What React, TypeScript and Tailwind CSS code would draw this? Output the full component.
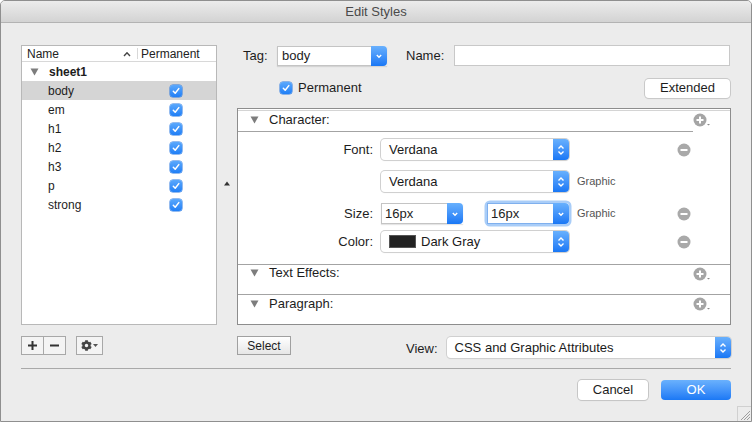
import React from "react";
import { FaCog } from "react-icons/fa";

const Check = () => (
  <span className="w-[12px] h-[12px] rounded-[3px] bg-gradient-to-b from-[#5aa8fc] to-[#1f7ff6] flex items-center justify-center shadow-[0_0_0_0.5px_#2a78e0]">
    <svg width="10" height="10" viewBox="0 0 10 10">
      <path d="M2.3 5.3 L4.2 7.2 L7.8 2.6" stroke="white" strokeWidth="1.5" fill="none" strokeLinecap="round" strokeLinejoin="round" />
    </svg>
  </span>
);

const UpDown = () => (
  <span className="w-[16px] h-full rounded-r-[4px] bg-gradient-to-b from-[#68b0fd] to-[#1877f5] flex items-center justify-center shrink-0">
    <svg width="10" height="14" viewBox="0 0 10 14">
      <path d="M2.5 5.5 L5 3 L7.5 5.5" stroke="white" strokeWidth="1.4" fill="none" />
      <path d="M2.5 8.5 L5 11 L7.5 8.5" stroke="white" strokeWidth="1.4" fill="none" />
    </svg>
  </span>
);

const DownOnly = () => (
  <span className="w-[16px] h-full rounded-r-[4px] bg-gradient-to-b from-[#68b0fd] to-[#1877f5] flex items-center justify-center shrink-0">
    <svg width="10" height="10" viewBox="0 0 10 10">
      <path d="M2.8 4 L5 6.2 L7.2 4" stroke="white" strokeWidth="1.4" fill="none" />
    </svg>
  </span>
);

const Popup = ({ w, children }: { w: string; children: React.ReactNode }) => (
  <div className={`${w} h-[21px] flex rounded-[4px] bg-white shadow-[0_0_0_1px_#d0d0d0,0_1px_1px_rgba(0,0,0,0.12)]`}>
    <div className="flex-1 flex items-center pl-[8px] text-[13px] text-[#1a1a1a] overflow-hidden">{children}</div>
    <UpDown />
  </div>
);

const Minus = () => (
  <svg width="14" height="14" viewBox="0 0 14 14" className="shrink-0">
    <circle cx="7" cy="7" r="6.5" fill="#a9a9a9" />
    <rect x="3.5" y="6" width="7" height="2" fill="white" />
  </svg>
);

const Plus = () => (
  <svg width="19" height="14" viewBox="0 0 19 14" className="shrink-0">
    <circle cx="7" cy="7" r="6.5" fill="#a5a5a5" />
    <rect x="3.5" y="6" width="7" height="2" fill="white" />
    <rect x="6" y="3.5" width="2" height="7" fill="white" />
    <path d="M14 11 L17 11 L15.5 12.5 Z" fill="#8a8a8a" />
  </svg>
);

const Disclosure = () => (
  <svg width="9" height="8" viewBox="0 0 9 8" className="shrink-0">
    <path d="M0.5 0.5 L8.5 0.5 L4.5 7.5 Z" fill="#7d7d7d" />
  </svg>
);

const rows = ["body", "em", "h1", "h2", "h3", "p", "strong"];

export default function App() {
  return (
    <div className="w-[752px] h-[422px] bg-[#ececec] border border-[#8f8f8f] rounded-t-[5px] flex flex-col overflow-hidden relative font-['Liberation_Sans',Arial,sans-serif] text-[13px] text-[#1d1d1d]">
      {/* Title bar */}
      <div className="h-[22px] shrink-0 bg-gradient-to-b from-[#ececec] to-[#d3d3d3] border-b border-[#b3b3b3] flex items-center justify-center text-[13px] text-[#4a4a4a]">
        Edit Styles
      </div>

      <div className="flex flex-col pt-[22px] pl-[20px] pr-[20px]">
        {/* Main row */}
        <div className="flex h-[280px]">
          {/* Left list */}
          <div className="w-[196px] h-full bg-white border border-[#b8b8b8] flex flex-col">
            <div className="h-[16px] flex border-b border-[#d8d8d8] text-[12px] text-[#222] bg-white">
              <div className="w-[115px] flex items-center justify-between pl-[5px] pr-[6px]">
                <span>Name</span>
                <svg width="8" height="6" viewBox="0 0 8 6">
                  <path d="M1 5 L4 1.8 L7 5" stroke="#444" strokeWidth="1.4" fill="none" />
                </svg>
              </div>
              <div className="flex-1 flex items-center border-l border-[#d8d8d8] my-[2px] pl-[3px]">Permanent</div>
            </div>
            <div className="h-[19px] flex items-center pl-[8px] text-[12px] font-bold">
              <Disclosure />
              <span className="ml-[10px]">sheet1</span>
            </div>
            {rows.map((r, i) => (
              <div
                key={r}
                className={`h-[19px] flex items-center text-[12px] ${i === 0 ? "bg-[#d5d5d5]" : ""}`}
              >
                <span className="w-[148px] pl-[26px]">{r}</span>
                <Check />
              </div>
            ))}
          </div>

          {/* Splitter */}
          <div className="w-[20px] flex items-center justify-center pb-[3px]">
            <svg width="6" height="5" viewBox="0 0 6 5">
              <path d="M0 4.5 L3 0.5 L6 4.5 Z" fill="#333" />
            </svg>
          </div>

          {/* Right column */}
          <div className="w-[494px] flex flex-col">
            <div className="h-[21px] flex items-center">
              <span className="w-[40px] pl-[6px]">Tag:</span>
              <div className="w-[110px] h-[20px] flex shadow-[0_1px_1px_rgba(0,0,0,0.1)]">
                <div className="flex-1 bg-white border border-[#c4c4c4] border-r-0 flex items-center pl-[4px] text-[13px]">body</div>
                <DownOnly />
              </div>
              <span className="w-[48px] ml-[19px]">Name:</span>
              <div className="w-[276px] h-[21px] bg-white border border-[#c8c8c8]" />
            </div>
            <div className="h-[20px] mt-[12px] flex items-center">
              <span className="ml-[43px]">
                <Check />
              </span>
              <span className="ml-[6px]">Permanent</span>
              <div className="ml-auto mr-[1px] w-[85px] h-[19px] rounded-[4px] bg-white shadow-[0_0_0_1px_#c9c9c9,0_1px_1px_rgba(0,0,0,0.12)] flex items-center justify-center">
                Extended
              </div>
            </div>

            {/* Panel */}
            <div className="mt-[10px] flex-1 bg-white border border-[#8d8d8d] flex flex-col">
              <div className="h-px bg-[#d4d4d4] mt-px" />
              {/* Character header */}
              <div className="h-[21px] flex">
                <div className="flex-1 flex items-center border-b border-[#a3a3a3] pl-[12px] pb-[2px]">
                  <Disclosure />
                  <span className="ml-[10px]">Character:</span>
                </div>
                <div className="w-[37px] pt-[2px]">
                  <Plus />
                </div>
              </div>
              {/* Character body */}
              <div className="h-[132px] flex flex-col">
                <div className="h-[21px] mt-[7px] flex items-center">
                  <span className="w-[135px] text-right mr-[8px]">Font:</span>
                  <Popup w="w-[188px]">Verdana</Popup>
                  <span className="flex-1" />
                  <span className="mr-[39px]"><Minus /></span>
                </div>
                <div className="h-[21px] mt-[11px] flex items-center">
                  <span className="w-[135px] mr-[8px]" />
                  <Popup w="w-[188px]">Verdana</Popup>
                  <span className="ml-[8px] text-[11px] text-[#555]">Graphic</span>
                </div>
                <div className="h-[21px] mt-[11px] flex items-center">
                  <span className="w-[135px] text-right mr-[8px]">Size:</span>
                  <div className="w-[82px] h-[21px] flex shadow-[0_1px_1px_rgba(0,0,0,0.1)]">
                    <div className="flex-1 bg-white border border-[#c4c4c4] border-r-0 flex items-center pl-[3px]">16px</div>
                    <DownOnly />
                  </div>
                  <div className="ml-[24px] w-[82px] h-[21px] flex rounded-[3px] shadow-[0_0_0_2.5px_#a9cdf8]">
                    <div className="flex-1 bg-white border border-[#7fb0ee] border-r-0 flex items-center pl-[3px]">16px</div>
                    <DownOnly />
                  </div>
                  <span className="ml-[8px] text-[11px] text-[#555]">Graphic</span>
                  <span className="flex-1" />
                  <span className="mr-[39px]"><Minus /></span>
                </div>
                <div className="h-[21px] mt-[7px] flex items-center">
                  <span className="w-[135px] text-right mr-[8px]">Color:</span>
                  <Popup w="w-[188px]">
                    <span className="w-[27px] h-[13px] bg-[#222] border border-[#555] mr-[5px]" />
                    Dark Gray
                  </Popup>
                  <span className="flex-1" />
                  <span className="mr-[39px]"><Minus /></span>
                </div>
              </div>
              {/* Text Effects */}
              <div className="h-[30px] border-t border-[#a3a3a3] flex items-start">
                <div className="flex-1 h-[16px] flex items-center pl-[12px]">
                  <Disclosure />
                  <span className="ml-[10px]">Text Effects:</span>
                </div>
                <div className="w-[37px] pt-[2px]">
                  <Plus />
                </div>
              </div>
              {/* Paragraph */}
              <div className="flex-1 border-t border-[#a3a3a3] flex items-start">
                <div className="flex-1 h-[17px] flex items-center pl-[12px]">
                  <Disclosure />
                  <span className="ml-[10px]">Paragraph:</span>
                </div>
                <div className="w-[37px] pt-[2px]">
                  <Plus />
                </div>
              </div>
            </div>
          </div>
        </div>

        {/* Bottom controls */}
        <div className="h-[21px] mt-[11px] flex">
          <div className="w-[216px] flex items-start">
            <div className="h-[19px] flex border border-[#a8a8a8] bg-[#f4f4f4]">
              <div className="w-[22px] flex items-center justify-center border-r border-[#a8a8a8]">
                <svg width="9" height="9" viewBox="0 0 9 9">
                  <rect x="0" y="3.5" width="9" height="2" fill="#333" />
                  <rect x="3.5" y="0" width="2" height="9" fill="#333" />
                </svg>
              </div>
              <div className="w-[21px] flex items-center justify-center">
                <svg width="9" height="9" viewBox="0 0 9 9">
                  <rect x="0" y="3.5" width="9" height="2" fill="#333" />
                </svg>
              </div>
            </div>
            <div className="ml-[10px] w-[27px] h-[19px] border border-[#a8a8a8] bg-[#f4f4f4] flex items-center justify-center gap-[1px]">
              <FaCog size={11} color="#444" />
              <svg width="5" height="3" viewBox="0 0 5 3">
                <path d="M0 0 L5 0 L2.5 3 Z" fill="#555" />
              </svg>
            </div>
          </div>
          <div className="w-[494px] flex items-start">
            <div className="w-[54px] h-[19px] border border-[#a0a0a0] bg-gradient-to-b from-white to-[#e6e6e6] flex items-center justify-center text-[12px]">
              Select
            </div>
            <span className="ml-[115px] mt-[3px]">View:</span>
            <div className="ml-[9px] mt-px">
              <Popup w="w-[284px]">CSS and Graphic Attributes</Popup>
            </div>
          </div>
        </div>

        <div className="mt-[11px] h-px bg-[#a9a9a9]" />

        <div className="mt-[11px] h-[20px] flex justify-end gap-[13px]">
          <div className="w-[70px] h-[20px] rounded-[4px] bg-white shadow-[0_0_0_1px_#c6c6c6,0_1px_1px_rgba(0,0,0,0.12)] flex items-center justify-center">
            Cancel
          </div>
          <div className="w-[70px] h-[20px] rounded-[4px] bg-gradient-to-b from-[#6ab1fd] to-[#1a78f5] text-white flex items-center justify-center">
            OK
          </div>
        </div>
      </div>

      {/* Resize grip */}
      <div className="absolute right-0 bottom-0 w-[14px] h-[15px] border-l border-t border-[#d0d0d0] bg-[#ececec]">
        <svg width="14" height="15" viewBox="0 0 14 15">
          <path d="M3 13 L12 4 M6 13 L12 7 M9 13 L12 10" stroke="#8a8a8a" strokeWidth="0.8" />
        </svg>
      </div>
    </div>
  );
}
